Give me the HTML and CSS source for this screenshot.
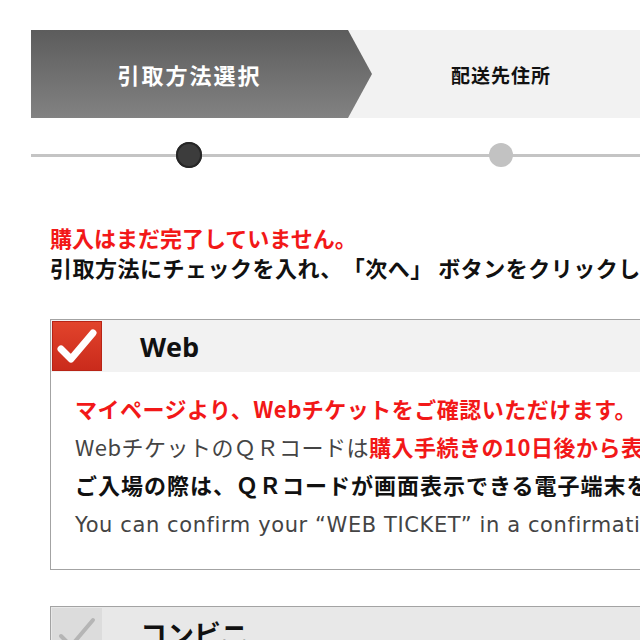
FILE: index.html
```html
<!DOCTYPE html>
<html lang="ja">
<head>
    <meta charset="UTF-8">
    <meta name="viewport" content="width=device-width, initial-scale=1.0">
    <title>引取方法選択</title>
    <link rel="stylesheet" href="styles.css">
</head>
<body>
    <div class="page">
        <div class="steps">
            <div class="step step-active">引取方法選択</div>
            <div class="step step-next">配送先住所</div>
        </div>

        <div class="progress">
            <span class="dot dot-active"></span>
            <span class="dot dot-next"></span>
        </div>

        <div class="content">
            <p class="notice">購入はまだ完了していません。</p>
            <p class="lead">引取方法にチェックを入れ、「次へ」 ボタンをクリックしてください。</p>

            <div class="method">
                <div class="method-head">
                    <span class="check check-on">
                        <svg viewBox="0 0 50 50" width="50" height="50">
                            <path d="M9 28 L19 38 L41 12" fill="none" stroke="#fff" stroke-width="7" stroke-linecap="round" stroke-linejoin="round"/>
                        </svg>
                    </span>
                    <span class="method-name">Web</span>
                </div>
                <div class="method-body">
                    <p class="line red">マイページより、Webチケットをご確認いただけます。</p>
                    <p class="line">WebチケットのＱＲコードは<span class="red">購入手続きの10日後から表示されます。</span></p>
                    <p class="line strong">ご入場の際は、ＱＲコードが画面表示できる電子端末をお持ちください。</p>
                    <p class="line latin">You can confirm your “WEB TICKET” in a confirmation page.</p>
                </div>
            </div>

            <div class="method method-off">
                <div class="method-head">
                    <span class="check check-off">
                        <svg viewBox="0 0 50 50" width="50" height="50">
                            <path d="M9 28 L19 38 L41 12" fill="none" stroke="#b5b5b5" stroke-width="4" stroke-linecap="round" stroke-linejoin="round"/>
                        </svg>
                    </span>
                    <span class="method-name">コンビニ</span>
                </div>
            </div>
        </div>
    </div>
</body>
</html>
```

FILE: styles.css
```css
body {
    margin: 0;
    background: #fff;
    color: #111;
    font-family: "Open Sans", "Noto Sans CJK JP", sans-serif;
    overflow: hidden;
}

p {
    margin: 0;
}

.page {
    width: 1100px;
    padding: 30px 0 0 31px;
}

/* ステップ表示 */
.steps {
    display: flex;
    height: 88px;
    background: #f2f2f2;
}

.step {
    display: flex;
    align-items: center;
    justify-content: center;
    font-family: "Noto Sans CJK JP", sans-serif;
    font-weight: bold;
}

.step-active {
    width: 341px;
    padding-right: 24px;
    box-sizing: border-box;
    color: #fff;
    font-size: 22px;
    letter-spacing: 2px;
    background: linear-gradient(#5c5c5c, #828282);
    clip-path: polygon(0 0, 317px 0, 100% 50%, 317px 100%, 0 100%);
}

.step-next {
    width: 306px;
    margin-left: -24px;
    color: #111;
    font-size: 19px;
    letter-spacing: 1px;
}

.progress {
    display: flex;
    align-items: center;
    height: 26px;
    margin-top: 24px;
    padding-left: 145px;
    background: linear-gradient(#c4c4c4, #c4c4c4) no-repeat 0 50% / 100% 3px;
}

.dot {
    border-radius: 50%;
}

.dot-active {
    width: 26px;
    height: 26px;
    background: #3c3c3c;
    box-shadow: inset 0 0 0 2px #262626;
}

.dot-next {
    width: 24px;
    height: 24px;
    margin-left: 287px;
    background: #c2c2c2;
}

.content {
    padding: 54px 0 0 19px;
    font-family: "Noto Sans CJK JP", sans-serif;
}

.notice {
    color: #f21818;
    font-size: 22px;
    font-weight: bold;
    line-height: 30px;
}

.lead {
    font-size: 22px;
    font-weight: bold;
    line-height: 30px;
    letter-spacing: 0.5px;
    text-spacing-trim: space-all;
    white-space: nowrap;
}

/* 引取方法 */
.method {
    margin-top: 37px;
    border: 1px solid #a3a3a3;
}

.method-head {
    display: flex;
    align-items: center;
    height: 52px;
    background: #f2f2f2;
}

.check {
    display: flex;
    width: 50px;
    height: 50px;
    margin-left: 1px;
}

.check-on {
    background: linear-gradient(#e2442c, #c92a1b);
    box-shadow: inset 0 0 0 1px #b82416;
}

.check-off {
    background: #dcdcdc;
}

.method-name {
    margin-left: 38px;
    font-family: "Open Sans", "Noto Sans CJK JP", sans-serif;
    font-size: 27px;
    font-weight: bold;
    color: #111;
}

.method-body {
    padding: 17px 0 25px 24px;
}

.line {
    font-size: 22px;
    letter-spacing: 0.5px;
    line-height: 38px;
    color: #444;
    white-space: nowrap;
}

.latin {
    margin-top: 3px;
    font-family: "DejaVu Sans", sans-serif;
    font-size: 21px;
    letter-spacing: 0.6px;
}

.red {
    color: #f21818;
    font-weight: bold;
}

.strong {
    color: #111;
    font-weight: bold;
    letter-spacing: 1px;
}

.method-off {
    margin-top: 36px;
}

.method-off .method-head {
    background: #e8e8e8;
}
```
